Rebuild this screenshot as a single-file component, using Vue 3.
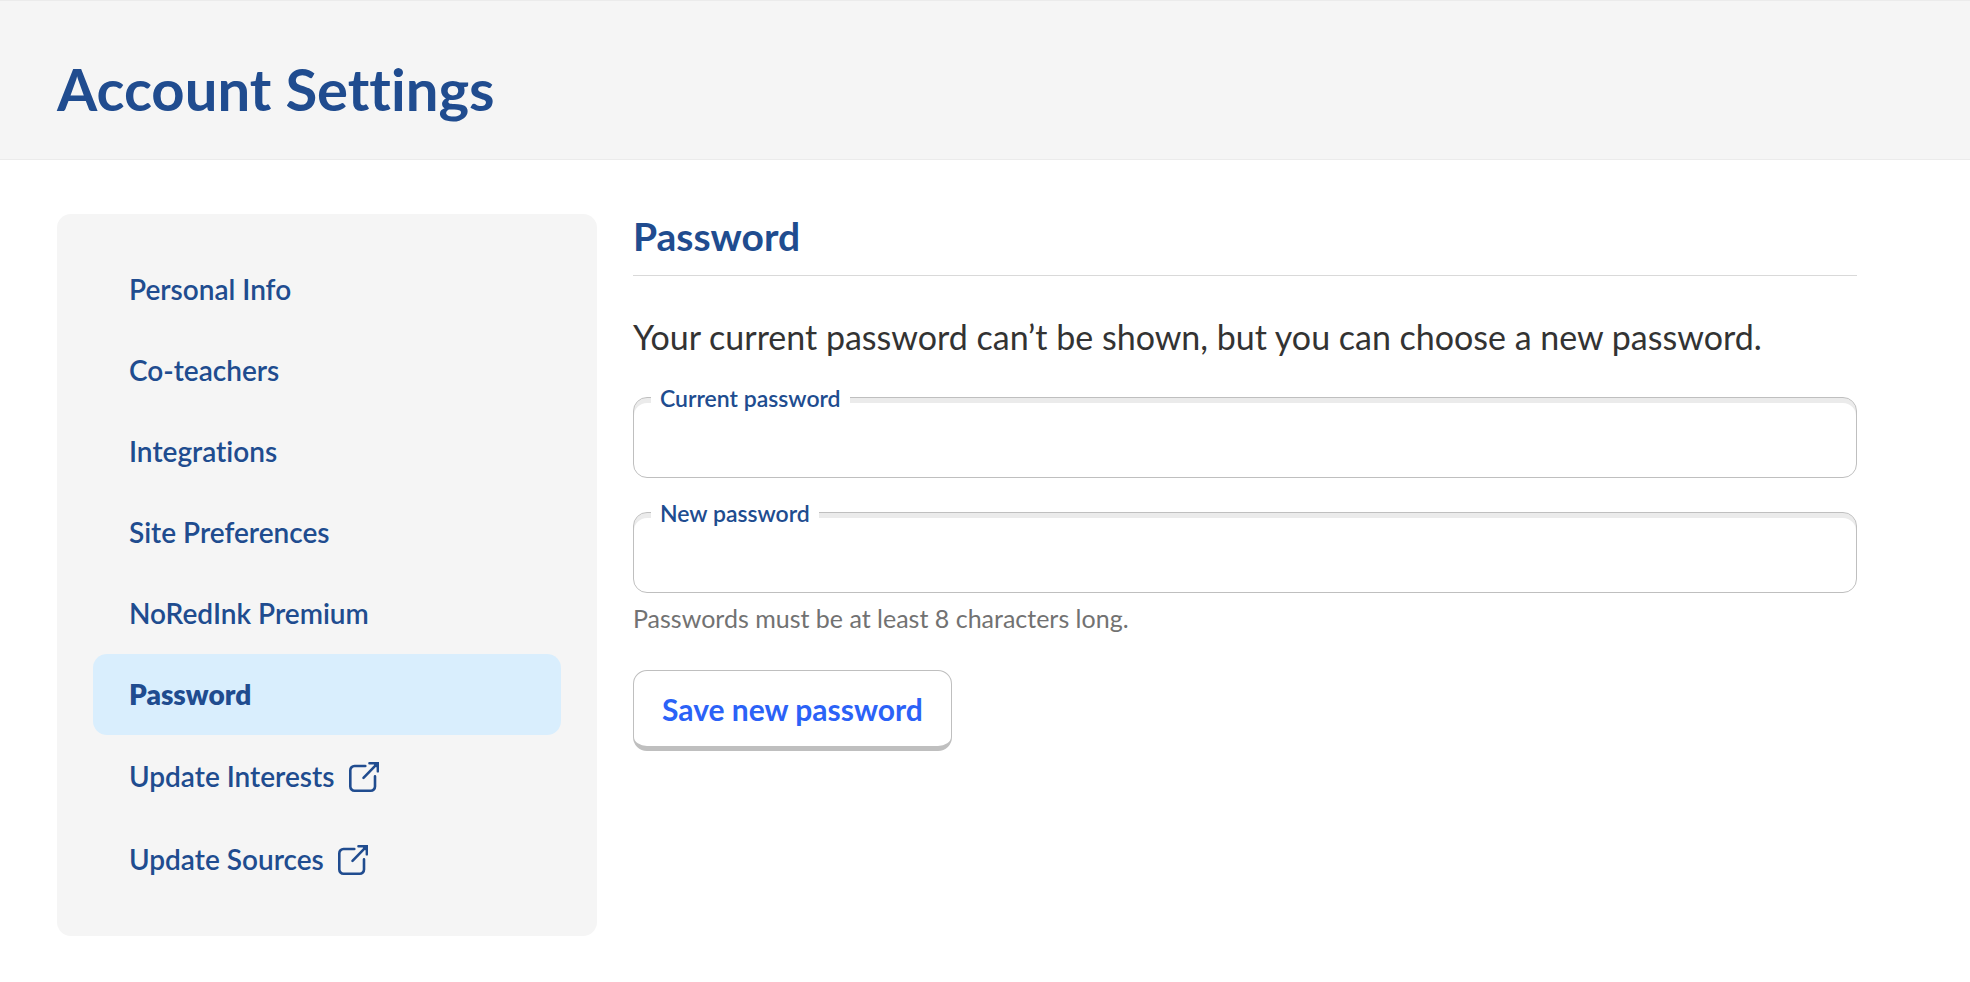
<script setup>
import { ref } from 'vue'

const links = [
  { label: 'Personal Info' },
  { label: 'Co-teachers' },
  { label: 'Integrations' },
  { label: 'Site Preferences' },
  { label: 'NoRedInk Premium' },
  { label: 'Password', active: true },
  { label: 'Update Interests', external: true },
  { label: 'Update Sources', external: true },
]

const currentPassword = ref('')
const newPassword = ref('')
</script>

<template>
  <div class="page">
    <header class="banner">
      <h1 class="title">Account Settings</h1>
    </header>

    <div class="layout">
      <nav class="sidebar" aria-label="Account settings">
        <a
          v-for="link in links"
          :key="link.label"
          href="#"
          class="nav-link"
          :class="{ active: link.active, external: link.external }"
          :aria-current="link.active ? 'page' : undefined"
        >
          {{ link.label }}
          <svg v-if="link.external" class="icon" viewBox="0 0 30 30" aria-hidden="true">
            <path d="M16.3 4H5.5a4.2 4.2 0 0 0-4.2 4.2v16.3a4.2 4.2 0 0 0 4.2 4.2h16.3a4.2 4.2 0 0 0 4.2-4.2V14.4" />
            <path d="M14.5 15.8L27.6 2.4" />
            <path class="head" d="M20.4 0H30V9.4a1.2 1.2 0 0 1-2.4 0V5.4L24.8 2.4H20.4a1.2 1.2 0 0 1 0-2.4Z" />
          </svg>
        </a>
      </nav>

      <main class="content">
        <h2 class="heading">Password</h2>
        <p class="intro">Your current password can’t be shown, but you can choose a new password.</p>
        <form class="form" @submit.prevent>
          <div class="field">
            <input id="current-password" v-model="currentPassword" class="input" type="password" autocomplete="off" />
            <label class="label" for="current-password">Current password</label>
          </div>
          <div class="field">
            <input id="new-password" v-model="newPassword" class="input" type="password" autocomplete="off" aria-describedby="hint" />
            <label class="label" for="new-password">New password</label>
          </div>
          <p id="hint" class="hint">Passwords must be at least 8 characters long.</p>
          <button class="save" type="submit">Save new password</button>
        </form>
      </main>
    </div>
  </div>
</template>

<style>
body {
  background: #fff;
}
</style>

<style scoped>
.page {
  font-family: Lato, "Open Sans", sans-serif;
  font-variant-ligatures: none;
  color: #333;
}

.banner {
  padding: 53px 57px 35px;
  background: #f5f5f5;
  border-top: 1px solid #ebebeb;
  border-bottom: 1px solid #ebebeb;
}

.title {
  margin: 0;
  font-size: 58px;
  line-height: 70px;
  font-weight: 700;
  color: #204c8f;
}

.layout {
  display: flex;
  align-items: flex-start;
  gap: 36px;
  padding: 54px 113px 45px 57px;
}

.sidebar {
  box-sizing: border-box;
  flex: 0 0 540px;
  display: flex;
  flex-direction: column;
  padding: 35px 36px;
  border-radius: 14px;
  background: #f5f5f5;
}

.nav-link {
  display: flex;
  align-items: center;
  gap: 14px;
  padding: 0 36px;
  border-radius: 14px;
  font-size: 28px;
  line-height: 81px;
  font-weight: 600;
  color: #204c8f;
  text-decoration: none;
}

.nav-link.active {
  background: #d9eefd;
  font-weight: 800;
}

.nav-link.external {
  line-height: 83px;
}

.icon {
  width: 30px;
  height: 30px;
  fill: none;
  stroke: #204c8f;
  stroke-width: 2.6;
  stroke-linecap: round;
}

.icon .head {
  fill: #204c8f;
  stroke: none;
}

.content {
  flex: 1;
  min-width: 0;
}

.heading {
  margin: 0;
  padding-bottom: 17px;
  border-bottom: 1px solid #d9d9d9;
  font-size: 39px;
  line-height: 44px;
  font-weight: 700;
  color: #204c8f;
}

.intro {
  margin: 37px 0 36px;
  font-size: 34px;
  line-height: 48px;
}

.form {
  display: flex;
  flex-direction: column;
  align-items: flex-start;
}

.field {
  position: relative;
  width: 100%;
}

.field + .field {
  margin-top: 34px;
}

.input {
  display: block;
  box-sizing: border-box;
  width: 100%;
  height: 81px;
  padding: 6px 28px 0;
  border: 1px solid #bfbfbf;
  border-radius: 14px;
  background: #fff;
  box-shadow: inset 0 5px 0 #ebebeb;
  font: inherit;
  font-size: 28px;
  color: #333;
}

.label {
  position: absolute;
  top: -12px;
  left: 18px;
  padding: 0 9px;
  background: #fff;
  font-size: 23px;
  line-height: 26px;
  font-weight: 600;
  color: #204c8f;
}

.hint {
  margin: 9px 0 36px;
  font-size: 25px;
  line-height: 32px;
  color: #727272;
}

.save {
  box-sizing: border-box;
  height: 81px;
  padding: 0 28px;
  border: 1px solid #bfbfbf;
  border-bottom-width: 5px;
  border-radius: 14px;
  background: #fff;
  font-family: inherit;
  font-variant-ligatures: inherit;
  font-size: 30px;
  font-weight: 700;
  color: #2b62f7;
}
</style>
